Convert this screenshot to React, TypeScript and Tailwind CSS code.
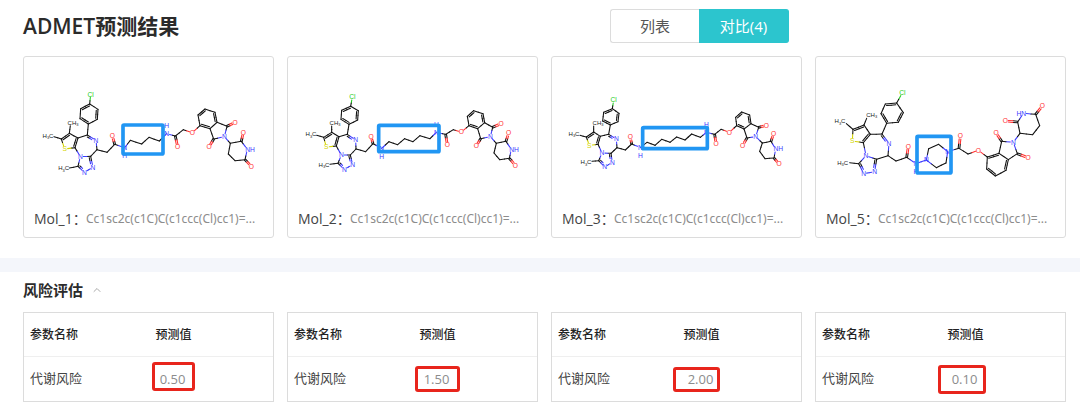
import { useState } from 'react';
import { ChevronUp } from 'lucide-react';

type Point = [number, number];

interface Molecule {
  name: string;
  smiles: string;
  risk: string;
  riskMark: string;
  left: Record<string, Point>;
  linker: Point[];
  right: Record<string, Point>;
  hydrogens: Point[];
  ureaLabel: string;
  piperazine?: boolean;
  box: { x: number; y: number; width: number; height: number };
}

// [from, to, order, atom the inner line of a double bond leans to]
type Bond = [string, string, number?, string?];

const LEFT_BONDS: Bond[] = [
  ['Cl', 'p1'], ['p1', 'p2'], ['p2', 'p3', 2, 'p5'], ['p3', 'p4'], ['p4', 'p5', 2, 'p2'], ['p5', 'p6'], ['p6', 'p1', 2, 'p3'],
  ['p4', 'c7'], ['c7', 'N8', 2, 'c10'], ['N8', 'c9'], ['c9', 'c10'], ['c10', 'N11'], ['N11', 'c12'],
  ['c12', 'c15', 2, 'c13'], ['c15', 'c7'], ['c12', 'S'], ['S', 'c13'], ['c13', 'c14', 2, 'c12'], ['c14', 'c15'],
  ['N11', 'c16'], ['c16', 'N17', 2, 'c10'], ['N17', 'N18'], ['N18', 'c10', 2, 'c16'],
  ['c14', 'm1'], ['c13', 'm2'], ['c16', 'm3'], ['c9', 'c19'], ['c19', 'c20'], ['c20', 'O', 2], ['c20', 'Na'],
];

const RIGHT_BONDS: Bond[] = [
  ['Nb', 'k1'], ['k1', 'Oa', 2], ['k1', 'k2'], ['k2', 'Ob'], ['Ob', 'a1'],
  ['a1', 'a2'], ['a2', 'a3', 2, 'a5'], ['a3', 'a4'], ['a4', 'a5', 2, 'a2'], ['a5', 'a6'], ['a6', 'a1', 2, 'a4'],
  ['a5', 'i1'], ['i1', 'Oc', 2], ['i1', 'Ni'], ['Ni', 'i2'], ['i2', 'Od', 2], ['i2', 'a6'],
  ['Ni', 'g1'], ['g1', 'g2'], ['g2', 'Oe', 2], ['g2', 'Ng'], ['Ng', 'g4'], ['g4', 'Of', 2], ['g4', 'g5'], ['g5', 'g6'], ['g6', 'g1'],
];

const SMILES = 'Cc1sc2c(c1C)C(c1ccc(Cl)cc1)=...';

const MOLECULES: Molecule[] = [
  {
    name: 'Mol_1', smiles: SMILES, risk: '0.50', riskMark: 'left-[3px] -top-[7px] w-[43px] h-[29px]',
    left: {
      Cl: [212, 43], p1: [209, 72], p2: [234, 88], p3: [232, 118], p4: [205, 132], p5: [180, 116], p6: [182, 86],
      c7: [202, 165], N8: [228, 181], c9: [231, 209], c10: [212, 229], N11: [181, 230], c12: [165, 203], S: [134, 207],
      c13: [124, 177], c14: [148, 160], c15: [174, 174], c16: [174, 259], N17: [193, 277], N18: [219, 262],
      m1: [151, 137], m2: [102, 170], m3: [148, 264], M1: [159, 128], M2: [84, 167], M3: [131, 265],
      c19: [261, 217], c20: [284, 193], O: [277, 167], Na: [314, 203],
    },
    linker: [[314, 203], [331, 181], [365, 192], [387, 172], [418, 183], [440, 161]],
    right: {
      Nb: [80, 161], k1: [106, 168], Oa: [113, 201], k2: [130, 149], Ob: [157, 158],
      a1: [180, 137], a2: [174, 105], a3: [195, 87], a4: [225, 97], a5: [231, 127], a6: [210, 146],
      i1: [261, 139], Oc: [285, 127], Ni: [253, 170], i2: [221, 177], Od: [207, 201],
      g1: [271, 190], g2: [304, 184], Oe: [310, 157], Ng: [322, 208], g4: [315, 239], Of: [334, 259], g5: [285, 242], g6: [265, 222],
    },
    hydrogens: [[440, 137], [314, 227]], ureaLabel: 'NH',
    box: { x: 309, y: 135, width: 120, height: 87 },
  },
  {
    name: 'Mol_2', smiles: SMILES, risk: '1.50', riskMark: 'left-[2px] -top-[3px] w-[45px] h-[26px]',
    left: {
      Cl: [205, 51], p1: [200, 79], p2: [223, 92], p3: [221, 120], p4: [195, 133], p5: [171, 118], p6: [173, 91],
      c7: [190, 163], N8: [215, 180], c9: [216, 207], c10: [199, 225], N11: [172, 225], c12: [157, 198], S: [127, 201],
      c13: [119, 172], c14: [143, 157], c15: [165, 170], c16: [162, 250], N17: [181, 268], N18: [206, 254],
      m1: [143, 138], m2: [98, 166], m3: [138, 253], M1: [153, 129], M2: [81, 163], M3: [120, 255],
      c19: [245, 215], c20: [267, 191], O: [261, 169], Na: [293, 205],
    },
    linker: [[293, 205], [315, 185], [341, 194], [362, 176], [387, 185], [408, 167], [438, 176], [457, 157]],
    right: {
      Nb: [97, 157], k1: [125, 163], Oa: [130, 195], k2: [148, 149], Ob: [172, 156],
      a1: [195, 137], a2: [190, 109], a3: [209, 92], a4: [237, 101], a5: [242, 128], a6: [221, 146],
      i1: [266, 142], Oc: [291, 131], Ni: [259, 170], i2: [230, 176], Od: [217, 198],
      g1: [277, 190], g2: [306, 184], Oe: [314, 159], Ng: [322, 208], g4: [316, 235], Of: [334, 256], g5: [287, 239], g6: [270, 219],
    },
    hydrogens: [[457, 133], [293, 229]], ureaLabel: 'NH',
    box: { x: 284, y: 136, width: 181, height: 79 },
  },
  {
    name: 'Mol_3', smiles: SMILES, risk: '2.00', riskMark: '-left-[4px] -top-[2px] w-[47px] h-[25px]',
    left: {
      Cl: [197, 60], p1: [193, 86], p2: [213, 100], p3: [210, 125], p4: [187, 135], p5: [164, 123], p6: [167, 97],
      c7: [182, 163], N8: [205, 177], c9: [207, 203], c10: [189, 220], N11: [162, 219], c12: [150, 193], S: [124, 196],
      c13: [115, 171], c14: [137, 156], c15: [157, 169], c16: [152, 242], N17: [170, 261], N18: [193, 247],
      m1: [137, 138], m2: [96, 166], m3: [132, 244], M1: [150, 129], M2: [78, 161], M3: [114, 247],
      c19: [232, 210], c20: [251, 192], O: [247, 171], Na: [277, 202],
    },
    linker: [[277, 202], [297, 187], [321, 196], [341, 178], [366, 187], [386, 171], [411, 180], [431, 162], [457, 172], [475, 157]],
    right: {
      Nb: [115, 157], k1: [140, 163], Oa: [144, 191], k2: [159, 148], Ob: [184, 157],
      a1: [206, 137], a2: [203, 112], a3: [221, 96], a4: [245, 105], a5: [249, 131], a6: [228, 147],
      i1: [272, 142], Oc: [295, 136], Ni: [263, 170], i2: [237, 174], Od: [224, 196],
      g1: [283, 189], g2: [309, 184], Oe: [317, 161], Ng: [323, 207], g4: [318, 234], Of: [333, 252], g5: [291, 236], g6: [275, 214],
    },
    hydrogens: [[475, 133], [277, 226]], ureaLabel: 'NH',
    box: { x: 284, y: 143, width: 194, height: 63 },
  },
  {
    name: 'Mol_5', smiles: SMILES, risk: '0.10', riskMark: '-left-[3px] -top-[4px] w-[48px] h-[29px]',
    left: {
      Cl: [271, 39], p1: [254, 69], p2: [274, 98], p3: [259, 127], p4: [224, 130], p5: [207, 101], p6: [220, 72],
      c7: [210, 162], N8: [231, 190], c9: [228, 227], c10: [194, 238], N11: [162, 227], c12: [154, 188], S: [121, 183],
      c13: [123, 148], c14: [156, 135], c15: [175, 163], c16: [140, 251], N17: [155, 281], N18: [188, 275],
      m1: [164, 115], m2: [103, 131], m3: [113, 248], M1: [179, 104], M2: [84, 124], M3: [92, 248],
      c19: [252, 243], c20: [284, 232], O: [289, 199], Na: [312, 251],
    },
    linker: [[343, 240], [350, 206], [380, 193], [407, 215], [402, 249], [373, 263], [343, 240]],
    right: {
      Nb: [47, 215], k1: [81, 205], Oa: [85, 168], k2: [108, 222], Ob: [139, 211],
      a1: [166, 231], a2: [164, 267], a3: [190, 288], a4: [222, 271], a5: [229, 239], a6: [201, 220],
      i1: [256, 221], Oc: [288, 233], Ni: [244, 187], i2: [209, 184], Od: [192, 158],
      g1: [264, 160], g2: [257, 126], Oe: [220, 123], Ng: [274, 100], g4: [311, 103], Of: [331, 78], g5: [323, 137], g6: [302, 164],
    },
    hydrogens: [[312, 275]], ureaLabel: 'HN', piperazine: true,
    box: { x: 315, y: 169, width: 102, height: 110 },
  },
];

const COLORS: Record<string, string> = { N: '#3b3bff', O: '#ff3030', S: '#d4d400', Cl: '#22cc22', C: '#111111' };

function elementOf(id: string) {
  if (id === 'Cl') return 'Cl';
  return /^[NOS]/.test(id) ? id[0] : 'C';
}

function Segment({ from, to, colorA, colorB }: { from: Point; to: Point; colorA: string; colorB: string }) {
  const mid: Point = [(from[0] + to[0]) / 2, (from[1] + to[1]) / 2];
  return (
    <>
      <path d={`M${from} L${mid}`} stroke={colorA} />
      <path d={`M${mid} L${to}`} stroke={colorB} />
    </>
  );
}

function BondLine({ atoms, bond }: { atoms: Record<string, Point>; bond: Bond }) {
  const [a, b, order = 1, toward] = bond;
  const [x1, y1] = atoms[a];
  const [x2, y2] = atoms[b];
  const length = Math.hypot(x2 - x1, y2 - y1);
  const ux = (x2 - x1) / length;
  const uy = (y2 - y1) / length;
  const elA = elementOf(a);
  const elB = elementOf(b);
  const padA = elA === 'C' ? 0 : 9;
  const padB = elB === 'C' ? 0 : 9;

  const line = (offset: number, trim: number) => (
    <Segment
      from={[x1 + ux * (padA + trim) - uy * offset, y1 + uy * (padA + trim) + ux * offset]}
      to={[x2 - ux * (padB + trim) - uy * offset, y2 - uy * (padB + trim) + ux * offset]}
      colorA={COLORS[elA]}
      colorB={COLORS[elB]}
    />
  );

  if (order === 1) return line(0, 0);
  if (!toward) return <>{line(2.5, 0)}{line(-2.5, 0)}</>;
  const [rx, ry] = atoms[toward];
  const side = ux * (ry - y1) - uy * (rx - x1) > 0 ? 1 : -1;
  return <>{line(0, 0)}{line(side * 5, 3)}</>;
}

function AtomLabel({ at, text, color }: { at: Point; text: string; color: string }) {
  return (
    <text x={at[0]} y={at[1] + 7} fill={color} stroke="none" fontSize="20" textAnchor="middle">{text}</text>
  );
}

function Structure({ molecule }: { molecule: Molecule }) {
  const { left, right, linker, box } = molecule;
  const shifted = Object.fromEntries(
    Object.entries(right).map(([id, [x, y]]) => [id, [x + 360, y] as Point]),
  );
  const last = linker.length - 1;

  return (
    <svg viewBox="0 0 747 420" className="block w-full" fill="none" strokeWidth="3.2" strokeLinecap="round" fontFamily="Liberation Sans, sans-serif" role="img" aria-label={molecule.name}>
      <g transform="translate(-12 69)">
        {LEFT_BONDS.map((bond) => <BondLine key={bond.join()} atoms={left} bond={bond} />)}
        {RIGHT_BONDS.map((bond) => <BondLine key={bond.join()} atoms={shifted} bond={bond} />)}
        {linker.slice(1).map((point, i) => {
          const startsAtN = i === 0 || (molecule.piperazine && i === 3);
          const endsAtN = i + 1 === last || (molecule.piperazine && i === 2);
          return (
            <Segment key={i} from={linker[i]} to={point} colorA={startsAtN ? COLORS.N : COLORS.C} colorB={endsAtN ? COLORS.N : COLORS.C} />
          );
        })}
        {molecule.piperazine && (
          <>
            <Segment from={left.Na} to={linker[0]} colorA={COLORS.N} colorB={COLORS.N} />
            <AtomLabel at={linker[0]} text="N" color={COLORS.N} />
          </>
        )}
        {Object.entries({ ...left, ...shifted }).map(([id, at]) => {
          const element = elementOf(id);
          if (element === 'C' || id === 'Ng') return null;
          return <AtomLabel key={id} at={at} text={element} color={COLORS[element]} />;
        })}
        <AtomLabel at={[shifted.Ng[0] + (molecule.piperazine ? -6 : 8), shifted.Ng[1]]} text={molecule.ureaLabel} color={COLORS.N} />
        {molecule.hydrogens.map((at) => <AtomLabel key={at.join()} at={at} text="H" color={COLORS.N} />)}
        {['M1', 'M2', 'M3'].map((id) => (
          <text key={id} x={left[id][0]} y={left[id][1] + 6} fill="#222" fontSize="18" textAnchor="middle">
            {id === 'M1' ? 'CH' : 'H'}
            <tspan fontSize="12" dy="4">3</tspan>
            {id !== 'M1' && <tspan dy="-4">C</tspan>}
          </text>
        ))}
        <rect {...box} rx="3" stroke="#2196f3" strokeWidth="11" />
      </g>
    </svg>
  );
}

function MoleculeCard({ molecule }: { molecule: Molecule }) {
  return (
    <div className="border border-[#dcdcdc] rounded-[3px] bg-white pb-1.5">
      <Structure molecule={molecule} />
      <div className="flex items-center px-2.5 mt-2.5 h-6 whitespace-nowrap overflow-hidden">
        <span className="text-sm text-[#444] w-[52px] shrink-0">{molecule.name}：</span>
        <span className="font-['Noto_Sans',sans-serif] text-xs text-[#8c8c8c]">{molecule.smiles}</span>
      </div>
    </div>
  );
}

function RiskTable({ molecule }: { molecule: Molecule }) {
  return (
    <table className="w-full table-fixed border border-[#dcdcdc] border-separate border-spacing-0">
      <thead>
        <tr className="h-11 text-xs text-[#222]">
          <th className="w-1/2 pl-1.5 text-left font-medium border-b border-[#efefef]">参数名称</th>
          <th className="w-1/2 text-left font-medium border-b border-[#efefef]">
            <span className="inline-block w-[50px] text-center">预测值</span>
          </th>
        </tr>
      </thead>
      <tbody>
        <tr className="h-11 text-[13px] text-[#444]">
          <td className="pl-1.5">代谢风险</td>
          <td>
            <span className="relative inline-block w-12 h-5 leading-5 text-center text-[#8c8c8c]">
              {molecule.risk}
              <span className={`absolute border-3 border-[#e8251c] rounded-[3px] ${molecule.riskMark}`} />
            </span>
          </td>
        </tr>
      </tbody>
    </table>
  );
}

export default function App() {
  const [view, setView] = useState('compare');
  const [open, setOpen] = useState(true);

  return (
    <div className="bg-white font-['Open_Sans','Noto_Sans_CJK_SC',sans-serif] text-[#333]">
      {/* Header */}
      <section className="pl-[23px] pr-3.5 pt-[9px] pb-5">
        <div className="grid grid-cols-4 gap-[13px] items-center mb-[13px]">
          <h1 className="col-span-2 text-[21px] leading-[34px] font-semibold text-[#2b2b2b]">ADMET预测结果</h1>
          <div className="justify-self-end mr-[13px] flex h-[34px] text-[15px]">
            <button
              onClick={() => setView('list')}
              className={`w-[89px] rounded-l-[3px] border border-r-0 cursor-pointer ${view === 'list' ? 'bg-[#2cc5ce] border-[#2cc5ce] text-white' : 'bg-white border-[#dcdcdc] text-[#555]'}`}
            >
              列表
            </button>
            <button
              onClick={() => setView('compare')}
              className={`w-[90px] rounded-r-[3px] border border-l-0 cursor-pointer ${view === 'compare' ? 'bg-[#2cc5ce] border-[#2cc5ce] text-white' : 'bg-white border-[#dcdcdc] text-[#555]'}`}
            >
              对比({MOLECULES.length})
            </button>
          </div>
        </div>
        <div className="grid grid-cols-4 gap-[13px]">
          {MOLECULES.map((molecule) => <MoleculeCard key={molecule.name} molecule={molecule} />)}
        </div>
      </section>

      <div className="h-3.5 bg-[#f4f6fb]" />

      {/* Risk assessment */}
      <section className="pl-[23px] pr-3.5 pt-1.5">
        <button onClick={() => setOpen(!open)} aria-expanded={open} className="flex items-center gap-2 h-6 mb-2.5 cursor-pointer">
          <h2 className="text-[15px] font-bold text-[#2b2b2b]">风险评估</h2>
          <ChevronUp className="w-3 h-3 text-[#aaa]" />
        </button>
        {open && (
          <div className="grid grid-cols-4 gap-[13px]">
            {MOLECULES.map((molecule) => <RiskTable key={molecule.name} molecule={molecule} />)}
          </div>
        )}
      </section>
    </div>
  );
}
